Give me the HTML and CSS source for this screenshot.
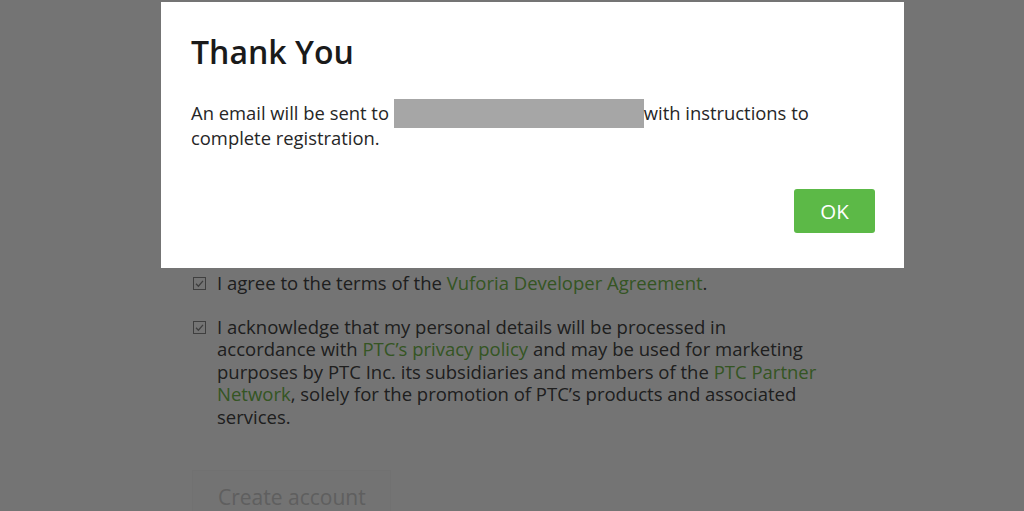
FILE: index.html
```html
<!DOCTYPE html>
<html lang="en">
<head>
<meta charset="utf-8">
<title>Thank You</title>
<link rel="stylesheet" href="styles.css">
</head>
<body>
<main class="page">
  <form class="form">
    <label class="check">
      <svg class="box" viewBox="0 0 13 13" width="13" height="13"><rect x="0.5" y="0.5" width="12" height="12" fill="#fff" stroke="#8a8a8a"/><path d="M3 6.8 L5.4 9.2 L10 3.8" fill="none" stroke="#8a8a8a" stroke-width="1.3"/></svg>
      <span>I agree to the terms of the <a href="#">Vuforia Developer Agreement</a>.</span>
    </label>
    <label class="check">
      <svg class="box" viewBox="0 0 13 13" width="13" height="13"><rect x="0.5" y="0.5" width="12" height="12" fill="#fff" stroke="#8a8a8a"/><path d="M3 6.8 L5.4 9.2 L10 3.8" fill="none" stroke="#8a8a8a" stroke-width="1.3"/></svg>
      <span>I acknowledge that my personal details will be processed in accordance with <a href="#">PTC’s privacy policy</a> and may be used for marketing purposes by PTC Inc. its subsidiaries and members of the <a href="#">PTC Partner Network</a>, solely for the promotion of PTC’s products and associated services.</span>
    </label>
    <button type="button" class="create" disabled>Create account</button>
  </form>
</main>
<div class="overlay">
  <div class="modal" role="dialog">
    <h1 class="title">Thank You</h1>
    <p class="msg">An email will be sent to <span class="redacted"></span>with instructions to complete registration.</p>
    <div class="actions"><button type="button" class="ok">OK</button></div>
  </div>
</div>
</body>
</html>
```
FILE: styles.css
```css
html, body { margin: 0; padding: 0; }
body {
  background: #fff;
  font-family: "Open Sans", "Liberation Sans", sans-serif;
  color: #444;
  height: 511px;
  overflow: hidden;
}
.page { padding: 272px 0 0 193px; }
.form { width: 632px; display: flex; flex-direction: column; }
.check {
  display: flex;
  gap: 11px;
  align-items: flex-start;
  font-size: 18.5px;
  line-height: 22.5px;
  margin-bottom: 21px;
}
.check .box { flex: none; margin-top: 5px; }
.check a { color: #74bb4d; text-decoration: none; }
.create {
  align-self: flex-start;
  margin-top: 21px;
  font: 21px "Open Sans", sans-serif;
  color: #d0d0d0;
  background: #fdfdfd;
  border: 1px solid #f8f8f8;
  padding: 12px 24px 8px 25px;
  margin-left: -1px;
}
.overlay {
  position: fixed;
  inset: 0;
  background: rgba(0, 0, 0, 0.545);
}
.modal {
  position: absolute;
  left: 161px;
  top: 2px;
  width: 743px;
  height: 266px;
  box-sizing: border-box;
  background: #fff;
  padding: 30px 29px 0 30px;
  color: #222;
}
.title {
  margin: 0;
  font-size: 32px;
  font-weight: 600;
  line-height: 40px;
  color: #1a1a1a;
}
.msg {
  margin: 28px 0 0;
  font-size: 18.4px;
  line-height: 25px;
  width: 660px;
  color: #262626;
}
.redacted {
  display: inline-block;
  width: 250px;
  height: 29px;
  background: #a6a6a6;
  vertical-align: -4px;
  margin: -6px 0 -4px;
}
.actions { display: flex; justify-content: flex-end; margin-top: 39px; }
.ok {
  width: 81px;
  height: 44px;
  border: none;
  border-radius: 3px;
  background: #5cb947;
  color: #fff;
  font: 20.5px "Open Sans", sans-serif;
}
```
